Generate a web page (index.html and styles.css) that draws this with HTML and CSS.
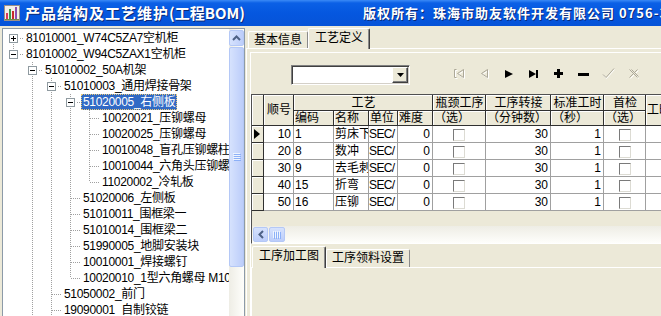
FILE: index.html
```html
<!DOCTYPE html>
<html lang="zh-CN">
<head>
    <meta charset="UTF-8">
    <title>产品结构及工艺维护(工程BOM)</title>
    <link rel="stylesheet" href="styles.css">
</head>
<body>

<div class="titlebar">
    <svg class="app-icon" width="16" height="16" viewBox="0 0 16 16">
        <rect x="0.5" y="0.5" width="15" height="15" fill="#f3efe9" stroke="#9a8f88"/>
        <rect x="2" y="8" width="2" height="6" fill="#d8385c"/>
        <rect x="5" y="4" width="2" height="10" fill="#3b9a4a"/>
        <rect x="8" y="6" width="2" height="8" fill="#c62a2a"/>
        <rect x="11" y="2" width="2" height="12" fill="#8a4fb0"/>
        <path d="M1 14.5h14" stroke="#6a8a4a"/>
    </svg>
    <span class="title">产品结构及工艺维护<span class="title-code">(工程BOM)</span></span>
    <span class="copyright">版权所有：珠海市助友软件开发有限公司 0756-3366888</span>
</div>

<div class="main">
    <!-- product tree -->
    <div class="tree-box">
        <div class="tree">
            <div class="node"><span class="c f"><span class="box plus"></span><span class="h short"></span></span><span class="label">81010001_W74C5ZA7空机柜</span></div>
            <div class="node"><span class="c l"><span class="box"></span><span class="h short"></span></span><span class="label">81010002_W94C5ZAX1空机柜</span></div>
            <div class="node"><span class="g"></span><span class="c t"><span class="box"></span><span class="h short"></span></span><span class="label">51010002_50A机架</span></div>
            <div class="node"><span class="g"></span><span class="g v"></span><span class="c t"><span class="box"></span><span class="h short"></span></span><span class="label">51010003_通用焊接骨架</span></div>
            <div class="node"><span class="g"></span><span class="g v"></span><span class="g v"></span><span class="c t"><span class="box"></span><span class="h short"></span></span><span class="label selected">51020005_右侧板</span></div>
            <div class="node"><span class="g"></span><span class="g v"></span><span class="g v"></span><span class="g v"></span><span class="c t"><span class="h"></span></span><span class="label">10020021_压铆螺母</span></div>
            <div class="node"><span class="g"></span><span class="g v"></span><span class="g v"></span><span class="g v"></span><span class="c t"><span class="h"></span></span><span class="label">10020025_压铆螺母</span></div>
            <div class="node"><span class="g"></span><span class="g v"></span><span class="g v"></span><span class="g v"></span><span class="c t"><span class="h"></span></span><span class="label">10010048_盲孔压铆螺柱</span></div>
            <div class="node"><span class="g"></span><span class="g v"></span><span class="g v"></span><span class="g v"></span><span class="c t"><span class="h"></span></span><span class="label">10010044_六角头压铆螺</span></div>
            <div class="node"><span class="g"></span><span class="g v"></span><span class="g v"></span><span class="g v"></span><span class="c l"><span class="h"></span></span><span class="label">11020002_冷轧板</span></div>
            <div class="node"><span class="g"></span><span class="g v"></span><span class="g v"></span><span class="c t"><span class="h"></span></span><span class="label">51020006_左侧板</span></div>
            <div class="node"><span class="g"></span><span class="g v"></span><span class="g v"></span><span class="c t"><span class="h"></span></span><span class="label">51010011_围框梁一</span></div>
            <div class="node"><span class="g"></span><span class="g v"></span><span class="g v"></span><span class="c t"><span class="h"></span></span><span class="label">51010014_围框梁二</span></div>
            <div class="node"><span class="g"></span><span class="g v"></span><span class="g v"></span><span class="c t"><span class="h"></span></span><span class="label">51990005_地脚安装块</span></div>
            <div class="node"><span class="g"></span><span class="g v"></span><span class="g v"></span><span class="c t"><span class="h"></span></span><span class="label">10010001_焊接螺钉</span></div>
            <div class="node"><span class="g"></span><span class="g v"></span><span class="g v"></span><span class="c l"><span class="h"></span></span><span class="label">10020010_1型六角螺母 M10</span></div>
            <div class="node"><span class="g"></span><span class="g v"></span><span class="c t"><span class="h"></span></span><span class="label">51050002_前门</span></div>
            <div class="node"><span class="g"></span><span class="g v"></span><span class="c t"><span class="h"></span></span><span class="label">19090001_自制铰链</span></div>
        </div>
        <div class="vscroll">
            <div class="sb-btn">
                <svg width="9" height="6" viewBox="0 0 9 6"><path d="M1 5l3.5-3.5L8 5" fill="none" stroke="#4d6185" stroke-width="2"/></svg>
            </div>
            <div class="sb-thumb vertical">
                <svg width="8" height="8" viewBox="0 0 8 8"><path d="M0 0.5h7M0 2.5h7M0 4.5h7M0 6.5h7" stroke="#eef4fe"/><path d="M1 1.5h7M1 3.5h7M1 5.5h7M1 7.5h7" stroke="#8cb0f8"/></svg>
            </div>
        </div>
    </div>

    <!-- process definition -->
    <div class="tabs">
        <div class="tab-strip">
            <span class="tab">基本信息</span>
            <span class="tab active">工艺定义</span>
        </div>
        <div class="tab-page">
            <div class="panel">
                <div class="toolbar">
                    <div class="combo">
                        <span class="combo-text"></span>
                        <span class="combo-btn">
                            <svg width="7" height="4" viewBox="0 0 7 4"><path d="M0 0h7L3.5 4z" fill="#000"/></svg>
                        </span>
                    </div>
                    <div class="navigator">
                        <span class="nav-btn" title="第一条">
                            <svg width="12" height="12" viewBox="0 0 12 12">
                                <path d="M2.5 2.5v8M2.5 2.5h2M2.5 10.5h2M11.5 2.5L5.5 6.5l6 4z" fill="none" stroke="#fff"/>
                                <path d="M1.5 1.5v8M1.5 1.5h2M1.5 9.5h2M10.5 1.5L4.5 5.5l6 4z" fill="none" stroke="#aca899"/>
                            </svg>
                        </span>
                        <span class="nav-btn" title="上一条">
                            <svg width="12" height="12" viewBox="0 0 12 12">
                                <path d="M10.5 2.5L4.5 6.5l6 4z" fill="none" stroke="#fff"/>
                                <path d="M9.5 1.5L3.5 5.5l6 4z" fill="none" stroke="#aca899"/>
                            </svg>
                        </span>
                        <span class="nav-btn" title="下一条">
                            <svg width="12" height="12" viewBox="0 0 12 12"><path d="M2 2l8 4-8 4z" fill="#000"/></svg>
                        </span>
                        <span class="nav-btn" title="最后一条">
                            <svg width="12" height="12" viewBox="0 0 12 12"><path d="M1 2l7 4-7 4z" fill="#000"/><rect x="8" y="2" width="2" height="8" fill="#000"/></svg>
                        </span>
                        <span class="nav-btn" title="增加">
                            <svg width="12" height="12" viewBox="0 0 12 12"><path d="M1 4h9v3H1zM4 1h3v9H4z" fill="#000"/></svg>
                        </span>
                        <span class="nav-btn" title="删除">
                            <svg width="12" height="12" viewBox="0 0 12 12"><path d="M0 5h11v3H0z" fill="#000"/></svg>
                        </span>
                        <span class="nav-btn" title="保存">
                            <svg width="14" height="12" viewBox="0 0 14 12">
                                <path d="M1.5 7.5l3 3 8-9" fill="none" stroke="#fff"/>
                                <path d="M1 6.5l3 3 8-9" fill="none" stroke="#aca899"/>
                            </svg>
                        </span>
                        <span class="nav-btn" title="取消">
                            <svg width="12" height="12" viewBox="0 0 12 12">
                                <path d="M2.5 2.5l8 8M10.5 2.5l-8 8" fill="none" stroke="#fff"/>
                                <path d="M1.5 1.5l8 8M9.5 1.5l-8 8M3.5 1.5l7 7" fill="none" stroke="#aca899"/>
                            </svg>
                        </span>
                    </div>
                </div>

                <div class="grid-box">
                    <table class="grid">
                        <colgroup>
                            <col class="w-ind"><col class="w-no"><col class="w-code"><col class="w-name"><col class="w-unit"><col class="w-diff"><col class="w-neck"><col class="w-move"><col class="w-std"><col class="w-first"><col class="w-more">
                        </colgroup>
                        <tr class="hr1">
                            <th class="ind" rowspan="2"></th>
                            <th rowspan="2">顺号</th>
                            <th colspan="4">工艺</th>
                            <th>瓶颈工序</th>
                            <th>工序转接</th>
                            <th>标准工时</th>
                            <th>首检</th>
                            <th class="left" rowspan="2">工时</th>
                        </tr>
                        <tr class="hr2">
                            <th class="left">编码</th>
                            <th class="left">名称</th>
                            <th class="left">单位</th>
                            <th class="left">难度</th>
                            <th class="left">（选）</th>
                            <th class="left">（分钟数）</th>
                            <th class="left">（秒）</th>
                            <th class="left">（选）</th>
                        </tr>
                        <tr class="row">
                            <td class="ind"><svg width="6" height="10" viewBox="0 0 6 10"><path d="M0 0l6 5-6 5z" fill="#000"/></svg></td>
                            <td class="num">10</td><td>1</td><td>剪床下</td><td class="unit">SEC/</td><td class="num">0</td>
                            <td class="chk"><span class="check"></span></td><td class="num">30</td><td class="num">1</td>
                            <td class="chk"><span class="check"></span></td><td></td>
                        </tr>
                        <tr class="row">
                            <td class="ind"></td>
                            <td class="num">20</td><td>8</td><td>数冲</td><td class="unit">SEC/</td><td class="num">0</td>
                            <td class="chk"><span class="check"></span></td><td class="num">30</td><td class="num">1</td>
                            <td class="chk"><span class="check"></span></td><td></td>
                        </tr>
                        <tr class="row">
                            <td class="ind"></td>
                            <td class="num">30</td><td>9</td><td>去毛刺</td><td class="unit">SEC/</td><td class="num">0</td>
                            <td class="chk"><span class="check"></span></td><td class="num">30</td><td class="num">1</td>
                            <td class="chk"><span class="check"></span></td><td></td>
                        </tr>
                        <tr class="row">
                            <td class="ind"></td>
                            <td class="num">40</td><td>15</td><td>折弯</td><td class="unit">SEC/</td><td class="num">0</td>
                            <td class="chk"><span class="check"></span></td><td class="num">30</td><td class="num">1</td>
                            <td class="chk"><span class="check"></span></td><td></td>
                        </tr>
                        <tr class="row">
                            <td class="ind"></td>
                            <td class="num">50</td><td>16</td><td>压铆</td><td class="unit">SEC/</td><td class="num">0</td>
                            <td class="chk"><span class="check"></span></td><td class="num">30</td><td class="num">1</td>
                            <td class="chk"><span class="check"></span></td><td></td>
                        </tr>
                    </table>
                    <div class="hscroll">
                        <div class="sb-btn small">
                            <svg width="6" height="9" viewBox="0 0 6 9"><path d="M5 1L1.5 4.5 5 8" fill="none" stroke="#4d6185" stroke-width="2"/></svg>
                        </div>
                        <div class="sb-thumb horizontal">
                            <svg width="8" height="8" viewBox="0 0 8 8"><path d="M0.5 0v7M2.5 0v7M4.5 0v7M6.5 0v7" stroke="#eef4fe"/><path d="M1.5 1v7M3.5 1v7M5.5 1v7M7.5 1v7" stroke="#8cb0f8"/></svg>
                        </div>
                    </div>
                </div>

                <div class="sub-tabs">
                    <span class="tab active">工序加工图</span>
                    <span class="tab">工序领料设置</span>
                </div>
                <div class="sub-page"></div>
            </div>
        </div>
    </div>
</div>

</body>
</html>
```

FILE: styles.css
```css
* {
    box-sizing: border-box;
}
body {
    margin: 0;
    width: 661px;
    height: 316px;
    overflow: hidden;
    background-color: #ece9d8;
    font-family: "Liberation Sans", "Noto Sans CJK SC", sans-serif;
    font-size: 12px;
    color: #000;
}

/* Title bar */
.titlebar {
    display: flex;
    align-items: center;
    height: 26px;
    background: linear-gradient(#3b8af6 0, #0b60e6 3px, #0557df 50%, #0653d8 100%);
    color: #fff;
    font-family: "Noto Sans CJK SC", sans-serif;
    font-weight: bold;
    white-space: nowrap;
    overflow: hidden;
    text-shadow: 1px 1px #0a2a78;
}
.app-icon {
    flex: none;
    margin: 0 5px 0 4px;
}
.title {
    flex: none;
    width: 338px;
    font-size: 15px;
    letter-spacing: 1px;
    line-height: 20px;
}
.title-code {
    letter-spacing: 0;
}
.copyright {
    font-size: 13px;
    letter-spacing: 1px;
    line-height: 20px;
}

.main {
    display: flex;
    height: 290px;
    padding-top: 2px;
}

/* Tree */
.tree-box {
    flex: none;
    display: flex;
    width: 243px;
    margin-left: 2px;
    border: 1px solid #8c9aa8;
    border-bottom: none;
    background-color: #fff;
}
.tree {
    flex: 1;
    padding: 1px 0 0 1px;
    overflow: hidden;
    line-height: 16px;
}
.node {
    display: flex;
    height: 16px;
    white-space: nowrap;
}
.g, .c {
    flex: none;
    display: flex;
    align-items: flex-start;
    width: 19px;
    height: 16px;
}
.v, .t {
    background: repeating-linear-gradient(#a0a0a0 0 1px, transparent 1px 2px) 9px 0 / 1px 16px no-repeat;
}
.l {
    background: repeating-linear-gradient(#a0a0a0 0 1px, transparent 1px 2px) 9px 0 / 1px 8px no-repeat;
}
.f {
    background: repeating-linear-gradient(#a0a0a0 0 1px, transparent 1px 2px) 9px 8px / 1px 8px no-repeat;
}
.h {
    width: 9px;
    height: 1px;
    margin: 8px 0 0 10px;
    background: repeating-linear-gradient(to right, #a0a0a0 0 1px, transparent 1px 2px);
}
.h.short {
    width: 4px;
    margin-left: 2px;
}
.box {
    flex: none;
    width: 9px;
    height: 9px;
    margin: 4px 0 0 5px;
    border: 1px solid #8f9aa0;
    background: linear-gradient(#000, #000) center / 5px 1px no-repeat, #fff;
}
.box.plus {
    background: linear-gradient(#000, #000) center / 5px 1px no-repeat,
                linear-gradient(#000, #000) center / 1px 5px no-repeat, #fff;
}
.label {
    margin-left: 1px;
    padding: 0 2px;
    height: 16px;
    letter-spacing: -0.3px;
}
.label.selected {
    background-color: #316ac5;
    color: #fff;
    outline: 1px dotted #e8c878;
    outline-offset: -1px;
}

/* XP scroll bars */
.vscroll {
    flex: none;
    display: flex;
    flex-direction: column;
    width: 15px;
    padding-top: 1px;
    background: linear-gradient(to right, #eeede5, #fefefb);
}
.sb-btn, .sb-thumb {
    display: flex;
    align-items: center;
    justify-content: center;
    border: 1px solid #b4c8f6;
    border-radius: 2px;
    background: linear-gradient(to right, #d6e2fd, #bccdfa);
}
.sb-btn {
    height: 16px;
}
.sb-thumb.vertical {
    height: 220px;
    margin-top: 1px;
}
.sb-btn.small {
    width: 15px;
    height: 15px;
    background: linear-gradient(#d6e2fd, #bccdfa);
}
.sb-thumb.horizontal {
    width: 16px;
    height: 15px;
    margin-left: 1px;
    background: linear-gradient(#d6e2fd, #bccdfa);
}

/* Tabs */
.tabs {
    flex: 1;
    min-width: 0;
    display: flex;
    flex-direction: column;
    margin-left: 1px;
}
.tab-strip, .sub-tabs {
    display: flex;
    align-items: flex-end;
    flex: none;
    height: 20px;
    padding-left: 2px;
}
.tab {
    height: 17px;
    padding: 0 5px;
    line-height: 16px;
    border-top: 1px solid #fff;
    border-left: 1px solid #fff;
    border-right: 1px solid #8a8a8a;
    border-radius: 2px 2px 0 0;
    white-space: nowrap;
}
.tab.active {
    position: relative;
    z-index: 1;
    height: 21px;
    margin-bottom: -1px;
    padding: 1px 6px 0;
    border-right-color: #404040;
    box-shadow: inset -1px 0 #8a8a8a;
    background-color: #ece9d8;
}
.tab-page {
    flex: 1;
    border-top: 1px solid #fff;
    border-left: 1px solid #fff;
    padding: 3px 0 0 3px;
}
.panel {
    height: 100%;
    display: flex;
    flex-direction: column;
    border-top: 1px solid #fff;
    border-left: 1px solid #fff;
}

/* Toolbar */
.toolbar {
    flex: none;
    display: flex;
    align-items: flex-start;
    height: 41px;
}
.combo {
    display: flex;
    width: 119px;
    height: 20px;
    margin: 12px 0 0 40px;
    border: 1px solid;
    border-color: #808080 #fff #fff #808080;
    box-shadow: inset 1px 1px #404040, inset -1px -1px #d4d0c8;
    background-color: #fff;
    padding: 1px;
}
.combo-text {
    flex: 1;
}
.combo-btn {
    display: flex;
    align-items: center;
    justify-content: center;
    width: 16px;
    height: 16px;
    margin-left: auto;
    background-color: #ece9d8;
    border: 1px solid;
    border-color: #fff #404040 #404040 #fff;
    box-shadow: inset -1px -1px #808080;
}
.navigator {
    display: flex;
    margin: 11px 0 0 36px;
}
.nav-btn {
    display: flex;
    align-items: center;
    justify-content: center;
    width: 25px;
    height: 20px;
}

/* Grid */
.grid-box {
    flex: none;
    height: 150px;
    overflow: hidden;
    border-top: 1px solid #505050;
    border-left: 1px solid #505050;
    border-bottom: 1px solid #fff;
}
.grid {
    table-layout: fixed;
    width: 454px;
    border-collapse: separate;
    border-spacing: 0;
}
.w-ind { width: 12px; }
.w-no { width: 30px; }
.w-code { width: 40px; }
.w-name { width: 35px; }
.w-unit { width: 29px; }
.w-diff { width: 35px; }
.w-neck { width: 53px; }
.w-move { width: 65px; }
.w-std { width: 53px; }
.w-first { width: 42px; }
.w-more { width: 60px; }
.grid th, .grid td {
    padding: 0 0 0 1px;
    border-right: 1px solid #a0a0a0;
    border-bottom: 1px solid #a0a0a0;
    overflow: hidden;
    white-space: nowrap;
    line-height: 14px;
    font-weight: normal;
    text-align: left;
}
.grid th {
    text-align: center;
    background-color: #ece9d8;
    border-color: #303030;
    box-shadow: inset 1px 1px #fff;
    text-spacing-trim: space-all;
}
.grid th.left {
    text-align: left;
}
.grid td {
    background-color: #fff;
}
.grid td.unit {
    padding-left: 0;
    letter-spacing: -0.6px;
}
.grid .ind {
    padding: 0;
    background-color: #ece9d8;
    border-color: #303030;
    box-shadow: inset 1px 1px #fff;
}
.grid td.ind svg {
    display: block;
    margin-left: 2px;
}
.hr1 { height: 16px; }
.hr2 { height: 15px; }
.row { height: 17px; }
.grid td.num {
    text-align: right;
    padding: 0 2px 0 0;
}
.grid td.chk {
    text-align: center;
    padding: 0;
}
.check {
    display: inline-block;
    vertical-align: middle;
    width: 12px;
    height: 12px;
    border: 1px solid;
    border-color: #7a7a7a #dcdbd3 #dcdbd3 #7a7a7a;
    background-color: #fff;
}

.hscroll {
    display: flex;
    height: 17px;
    margin-top: 15px;
    padding: 1px 0 0 1px;
    background: linear-gradient(#eeede5, #fefefb);
}

/* Sub tabs */
.sub-tabs {
    height: 22px;
    margin-top: 1px;
    padding-left: 1px;
}
.sub-tabs .tab {
    height: 18px;
}
.sub-tabs .tab.active {
    height: 22px;
}
.sub-page {
    flex: 1;
    border-top: 1px solid #fff;
    border-left: 1px solid #fff;
}
```
